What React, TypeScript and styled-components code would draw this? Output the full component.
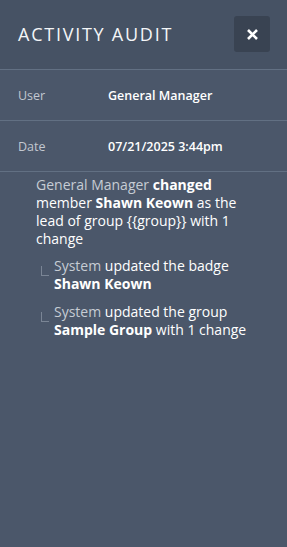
import React from "react";
import styled, { createGlobalStyle } from "styled-components";

const Global = createGlobalStyle`
  html, body { margin: 0; padding: 0; background: #4b576a; }
  body { font-family: "Open Sans", "Noto Sans", sans-serif; -webkit-font-smoothing: antialiased; }
  #root { min-height: 547px; }
`;

const Panel = styled.div`
  width: 287px;
  min-height: 547px;
  background: #4b576a;
  color: #ffffff;
  box-sizing: border-box;
`;

const Header = styled.header`
  height: 69px;
  background: #465264;
  border-bottom: 1px solid #627083;
  display: flex;
  align-items: center;
  justify-content: space-between;
  padding: 0 17px 0 18px;
`;

const Title = styled.h1`
  margin: 0;
  font-size: 18px;
  font-weight: 400;
  letter-spacing: 1.75px;
  color: #f4f6f8;
  margin-top: -2px;
`;

const CloseButton = styled.button`
  width: 36px;
  height: 36px;
  border: none;
  border-radius: 3px;
  background: #394352;
  display: flex;
  align-items: center;
  justify-content: center;
  padding: 0;
  margin-top: -1px;
  cursor: pointer;
`;

const Row = styled.div`
  display: flex;
  align-items: center;
  height: 50px;
  border-bottom: 1px solid #627083;
  padding-left: 18px;
  font-size: 12.5px;
`;

const Label = styled.span`
  width: 90px;
  color: #c2c8d0;
`;

const Value = styled.span`
  color: #ffffff;
  font-weight: 600;
`;

const Content = styled.div`
  padding: 4px 30px 0 36px;
  font-size: 14px;
  line-height: 18px;
`;

const Entry = styled.p`
  margin: 0;
  color: #ffffff;
`;

const Actor = styled.span`
  color: #c6ccd4;
`;

const Strong = styled.b`
  font-weight: 700;
`;

const SubList = styled.div`
  display: flex;
  flex-direction: column;
  gap: 10px;
  margin-top: 9px;
`;

const SubItem = styled.div`
  position: relative;
  padding-left: 18px;
`;

const Connector = styled.span`
  position: absolute;
  left: 5px;
  top: 9px;
  width: 7px;
  height: 9px;
  border-left: 1px solid #7a8595;
  border-bottom: 1px solid #7a8595;
`;

export default function App() {
  return (
    <>
      <Global />
      <Panel>
        <Header>
          <Title>ACTIVITY AUDIT</Title>
          <CloseButton aria-label="Close">
            <svg width="13" height="13" viewBox="0 0 13 13">
              <path d="M2 2 L11 11 M11 2 L2 11" stroke="#ffffff" strokeWidth="2.6" strokeLinecap="butt" />
            </svg>
          </CloseButton>
        </Header>
        <Row>
          <Label>User</Label>
          <Value>General Manager</Value>
        </Row>
        <Row>
          <Label>Date</Label>
          <Value>07/21/2025 3:44pm</Value>
        </Row>
        <Content>
          <Entry>
            <Actor>General Manager</Actor> <Strong>changed</Strong> member <Strong>Shawn Keown</Strong> as the lead of group {"{{group}}"} with 1 change
          </Entry>
          <SubList>
            <SubItem>
              <Connector />
              <Entry>
                <Actor>System</Actor> updated the badge <Strong>Shawn Keown</Strong>
              </Entry>
            </SubItem>
            <SubItem>
              <Connector />
              <Entry>
                <Actor>System</Actor> updated the group <Strong>Sample Group</Strong> with 1 change
              </Entry>
            </SubItem>
          </SubList>
        </Content>
      </Panel>
    </>
  );
}
